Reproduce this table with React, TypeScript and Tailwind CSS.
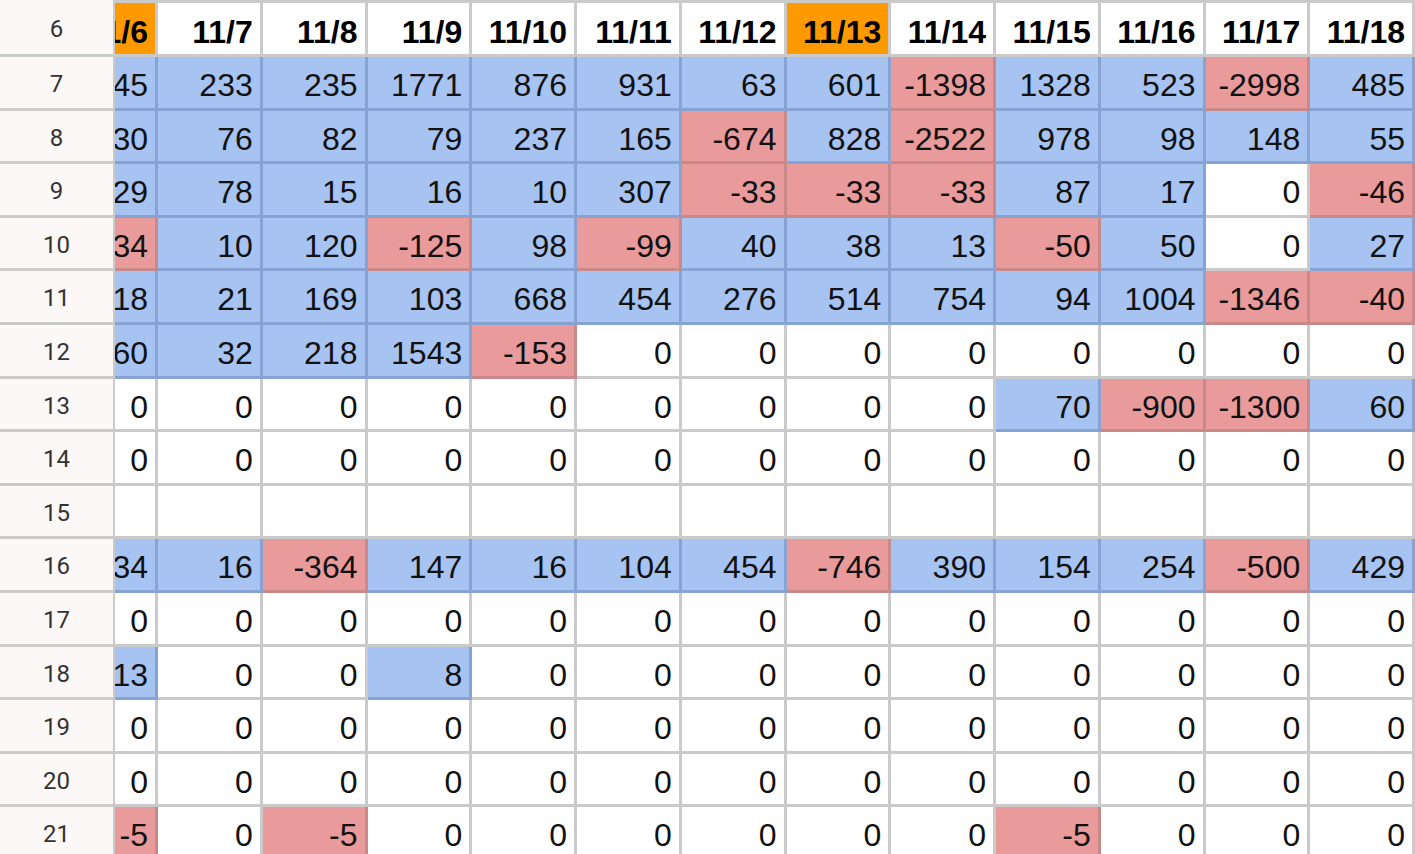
import React from "react"

type Fill = "w" | "b" | "r"
type Cell = { v: string; f: Fill }

const dates = ["11/6", "11/7", "11/8", "11/9", "11/10", "11/11", "11/12", "11/13", "11/14", "11/15", "11/16", "11/17", "11/18"]
const highlighted = ["11/6", "11/13"]

// "45b" -> blue 45, "-1398r" -> red, "0" -> plain white
const parse = (s: string): Cell => {
  const last = s.slice(-1)
  if (last === "b" || last === "r") return { v: s.slice(0, -1), f: last }
  return { v: s, f: "w" }
}

const raw: [number, string][] = [
  [7, "45b 233b 235b 1771b 876b 931b 63b 601b -1398r 1328b 523b -2998r 485b"],
  [8, "30b 76b 82b 79b 237b 165b -674r 828b -2522r 978b 98b 148b 55b"],
  [9, "29b 78b 15b 16b 10b 307b -33r -33r -33r 87b 17b 0 -46r"],
  [10, "34r 10b 120b -125r 98b -99r 40b 38b 13b -50r 50b 0 27b"],
  [11, "18b 21b 169b 103b 668b 454b 276b 514b 754b 94b 1004b -1346r -40r"],
  [12, "60b 32b 218b 1543b -153r 0 0 0 0 0 0 0 0"],
  [13, "0 0 0 0 0 0 0 0 0 70b -900r -1300r 60b"],
  [14, "0 0 0 0 0 0 0 0 0 0 0 0 0"],
  [15, "_ _ _ _ _ _ _ _ _ _ _ _ _"],
  [16, "34b 16b -364r 147b 16b 104b 454b -746r 390b 154b 254b -500r 429b"],
  [17, "0 0 0 0 0 0 0 0 0 0 0 0 0"],
  [18, "13b 0 0 8b 0 0 0 0 0 0 0 0 0"],
  [19, "0 0 0 0 0 0 0 0 0 0 0 0 0"],
  [20, "0 0 0 0 0 0 0 0 0 0 0 0 0"],
  [21, "-5r 0 -5r 0 0 0 0 0 0 -5r 0 0 0"],
]

const rows = raw.map(([n, s]) => ({
  n,
  cells: s.split(" ").map((t) => (t === "_" ? { v: "", f: "w" as Fill } : parse(t))),
}))

const fillClass: Record<Fill, string> = {
  w: "bg-white border-[#cacaca]",
  b: "bg-[#a6c3f2] border-[#87a3d3]",
  r: "bg-[#e99a9a] border-[#c98989]",
}

function RowHeader({ n, header }: { n: number; header?: boolean }) {
  return (
    <div
      className={`w-[115px] shrink-0 flex justify-center bg-[#fdf8f8] border-r-2 border-b-[3px] border-[#cacaca] font-['Roboto',sans-serif] text-[24px] leading-none text-[#333] ${
        header ? "pt-[17px]" : "pt-[15px]"
      }`}
    >
      {n}
    </div>
  )
}

function DataCell({ cell, first }: { cell: Cell; first: boolean }) {
  return (
    <div
      className={`${first ? "w-[43px]" : "w-[104.75px]"} shrink-0 overflow-hidden flex justify-end items-start whitespace-nowrap border-r-[3px] border-b-[3px] pr-[7px] pt-[12px] text-[32px] leading-none text-[#111] ${fillClass[cell.f]}`}
    >
      {cell.v}
    </div>
  )
}

export default function App() {
  return (
    <div className="w-[1415px] h-[854px] overflow-hidden bg-white font-['Liberation_Sans',Arial,sans-serif]">
      {/* date header row */}
      <div className="flex h-[57px]">
        <RowHeader n={6} header />
        {dates.map((d, i) => (
          <div
            key={d}
            className={`${i === 0 ? "w-[43px]" : "w-[104.75px]"} shrink-0 overflow-hidden flex justify-end items-start whitespace-nowrap border-t-[3px] border-r-[3px] border-b-[3px] border-[#cacaca] pr-[7px] pt-[13px] text-[32px] leading-none font-bold text-black ${
              highlighted.includes(d) ? "bg-[#ff9900]" : "bg-white"
            }`}
          >
            {d}
          </div>
        ))}
      </div>

      {rows.map((row) => (
        <div key={row.n} className="flex h-[53.6px]">
          <RowHeader n={row.n} />
          {row.cells.map((c, i) => (
            <DataCell key={i} cell={c} first={i === 0} />
          ))}
        </div>
      ))}
    </div>
  )
}
